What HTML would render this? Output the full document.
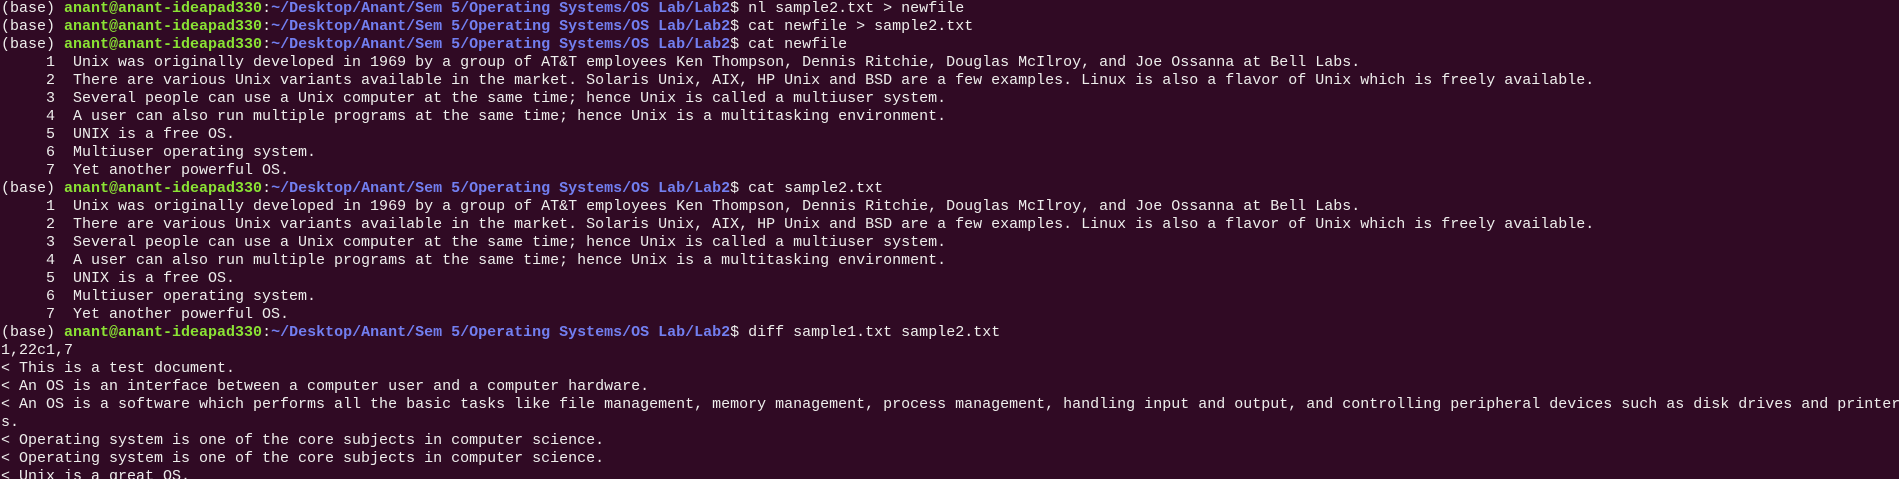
<!DOCTYPE html>
<html><head><meta charset="utf-8"><style>
html,body{margin:0;padding:0;background:#300a24;width:1899px;height:479px;overflow:hidden}
pre{margin:0;padding:0 0 0 1px;font-family:"Liberation Mono",monospace;font-size:15px;letter-spacing:0px;line-height:18px;color:#eeeeec;white-space:pre}
.g{color:#8ae234;font-weight:bold}.b{color:#727ff0;font-weight:bold}
</style></head><body><pre>(base) <span class="g">anant@anant-ideapad330</span>:<span class="b">~/Desktop/Anant/Sem 5/Operating Systems/OS Lab/Lab2</span>$ nl sample2.txt &gt; newfile
(base) <span class="g">anant@anant-ideapad330</span>:<span class="b">~/Desktop/Anant/Sem 5/Operating Systems/OS Lab/Lab2</span>$ cat newfile &gt; sample2.txt
(base) <span class="g">anant@anant-ideapad330</span>:<span class="b">~/Desktop/Anant/Sem 5/Operating Systems/OS Lab/Lab2</span>$ cat newfile
     1  Unix was originally developed in 1969 by a group of AT&amp;T employees Ken Thompson, Dennis Ritchie, Douglas McIlroy, and Joe Ossanna at Bell Labs.
     2  There are various Unix variants available in the market. Solaris Unix, AIX, HP Unix and BSD are a few examples. Linux is also a flavor of Unix which is freely available.
     3  Several people can use a Unix computer at the same time; hence Unix is called a multiuser system.
     4  A user can also run multiple programs at the same time; hence Unix is a multitasking environment.
     5  UNIX is a free OS.
     6  Multiuser operating system.
     7  Yet another powerful OS.
(base) <span class="g">anant@anant-ideapad330</span>:<span class="b">~/Desktop/Anant/Sem 5/Operating Systems/OS Lab/Lab2</span>$ cat sample2.txt
     1  Unix was originally developed in 1969 by a group of AT&amp;T employees Ken Thompson, Dennis Ritchie, Douglas McIlroy, and Joe Ossanna at Bell Labs.
     2  There are various Unix variants available in the market. Solaris Unix, AIX, HP Unix and BSD are a few examples. Linux is also a flavor of Unix which is freely available.
     3  Several people can use a Unix computer at the same time; hence Unix is called a multiuser system.
     4  A user can also run multiple programs at the same time; hence Unix is a multitasking environment.
     5  UNIX is a free OS.
     6  Multiuser operating system.
     7  Yet another powerful OS.
(base) <span class="g">anant@anant-ideapad330</span>:<span class="b">~/Desktop/Anant/Sem 5/Operating Systems/OS Lab/Lab2</span>$ diff sample1.txt sample2.txt
1,22c1,7
&lt; This is a test document.
&lt; An OS is an interface between a computer user and a computer hardware.
&lt; An OS is a software which performs all the basic tasks like file management, memory management, process management, handling input and output, and controlling peripheral devices such as disk drives and printer
s.
&lt; Operating system is one of the core subjects in computer science.
&lt; Operating system is one of the core subjects in computer science.
&lt; Unix is a great OS.
</pre></body></html>
